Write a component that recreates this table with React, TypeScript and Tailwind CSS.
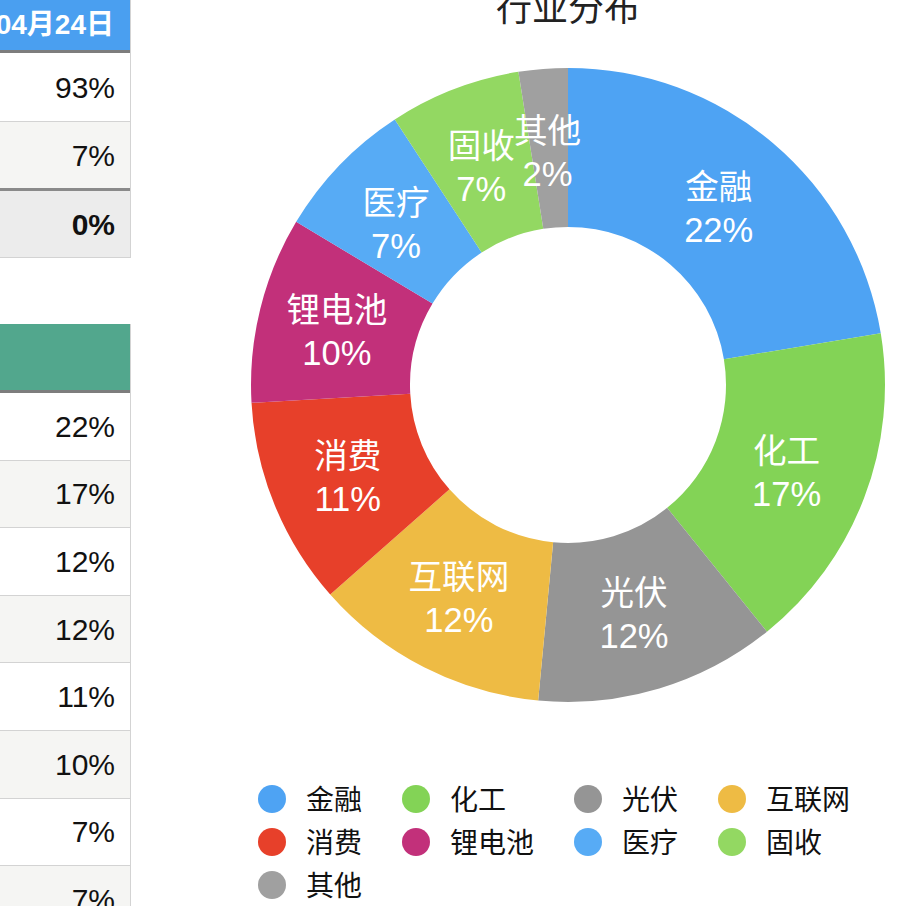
import React from "react";

type Slice = { name: string; value: number; color: string; label: string };

const slices: Slice[] = [
  { name: "金融", value: 22.4, color: "#4ea3f3", label: "22%" },
  { name: "化工", value: 16.8, color: "#83d356", label: "17%" },
  { name: "光伏", value: 12.3, color: "#959595", label: "12%" },
  { name: "互联网", value: 12.0, color: "#eebb44", label: "12%" },
  { name: "消费", value: 10.6, color: "#e7402a", label: "11%" },
  { name: "锂电池", value: 9.5, color: "#c2307a", label: "10%" },
  { name: "医疗", value: 7.2, color: "#57abf5", label: "7%" },
  { name: "固收", value: 6.7, color: "#93d862", label: "7%" },
  { name: "其他", value: 2.5, color: "#a0a0a0", label: "2%" },
];

const CX = 330;
const CY = 330;
const R = 321;
const RI = 160;
const RL = 239;

function pt(deg: number, rad: number): [number, number] {
  const a = (deg * Math.PI) / 180;
  return [CX + rad * Math.sin(a), CY - rad * Math.cos(a)];
}

function arc(a0: number, a1: number) {
  const large = a1 - a0 > 180 ? 1 : 0;
  const [x0, y0] = pt(a0, R);
  const [x1, y1] = pt(a1, R);
  const [x2, y2] = pt(a1, RI);
  const [x3, y3] = pt(a0, RI);
  return `M${x0} ${y0} A${R} ${R} 0 ${large} 1 ${x1} ${y1} L${x2} ${y2} A${RI} ${RI} 0 ${large} 0 ${x3} ${y3} Z`;
}

function Donut() {
  const total = slices.reduce((s, d) => s + d.value, 0);
  let acc = 0;
  const parts = slices.map((d) => {
    const a0 = (acc / total) * 360;
    acc += d.value;
    const a1 = (acc / total) * 360;
    return { ...d, a0, a1 };
  });

  return (
    <svg width={660} height={660} viewBox="0 0 660 660" className="block">
      {parts.map((p) => (
        <path key={p.name} d={arc(p.a0, p.a1)} fill={p.color} />
      ))}
      {parts.map((p) => {
        const [x, y] = pt((p.a0 + p.a1) / 2, RL);
        return (
          <g key={p.name + "-l"} fill="#ffffff" textAnchor="middle">
            <text x={x - 2} y={y - 21} fontSize={34} dominantBaseline="central" fontFamily="'Noto Sans CJK SC', sans-serif">
              {p.name}
            </text>
            <text x={x - 2} y={y + 25} fontSize={35} dominantBaseline="central" fontFamily="'Liberation Sans', sans-serif">
              {p.label}
            </text>
          </g>
        );
      })}
    </svg>
  );
}

function Row({ value, shade }: { value: string; shade: boolean }) {
  return (
    <div
      className={`h-[67.6px] flex items-center justify-end pr-[15px] border-b border-[#d3d3d3] ${
        shade ? "bg-[#f5f5f3]" : "bg-white"
      }`}
    >
      {value}
    </div>
  );
}

export default function App() {
  const industry = ["22%", "17%", "12%", "12%", "11%", "10%", "7%", "7%"];

  return (
    <div className="w-[907px] h-[906px] overflow-hidden bg-white flex font-['Liberation_Sans','Noto_Sans_CJK_SC',sans-serif] text-[#111]">
      {/* left table, cropped */}
      <div className="w-[131px] shrink-0 flex flex-col text-[30px]">
        <div className="border-r border-[#d3d3d3]">
          <div className="h-[53px] bg-[#4a9ff0] border-b-[3px] border-[#7d7d7d] flex items-center justify-end pr-[16px] text-white text-[28px] font-bold whitespace-nowrap overflow-hidden">
            04月24日
          </div>
          <div className="h-[69px] flex items-center justify-end pr-[15px] border-b border-[#d3d3d3] bg-white">
            93%
          </div>
          <div className="h-[69px] flex items-center justify-end pr-[15px] border-b-[3px] border-[#8a8a8a] bg-[#f5f5f3]">
            7%
          </div>
          <div className="h-[67px] flex items-center justify-end pr-[15px] border-b border-[#d3d3d3] bg-[#ececec] font-bold">
            0%
          </div>
        </div>

        <div className="mt-[66px] border-r border-[#d3d3d3]">
          <div className="h-[69px] bg-[#52a78d] border-b-[3px] border-[#7d7d7d]" />
          {industry.map((v, i) => (
            <Row key={i} value={v} shade={i % 2 === 1} />
          ))}
        </div>
      </div>

      {/* chart */}
      <div className="flex-1 flex flex-col pl-[107px]">
        <div className="w-[660px] h-[60px] text-center text-[36px] leading-[36px] text-[#222] font-['Noto_Sans_CJK_SC',sans-serif]">
          <div className="-mt-[13px]">行业分布</div>
        </div>
        <Donut />
        <div className="mt-[66px] ml-[20px] grid grid-cols-[repeat(4,max-content)] gap-x-[40px] text-[28px] leading-[43px] font-['Noto_Sans_CJK_SC',sans-serif] text-[#111]">
          {slices.map((s) => (
            <div key={s.name} className="flex items-center gap-[20px]">
              <span className="w-[28px] h-[28px] rounded-full shrink-0" style={{ backgroundColor: s.color }} />
              <span>{s.name}</span>
            </div>
          ))}
        </div>
      </div>
    </div>
  );
}
